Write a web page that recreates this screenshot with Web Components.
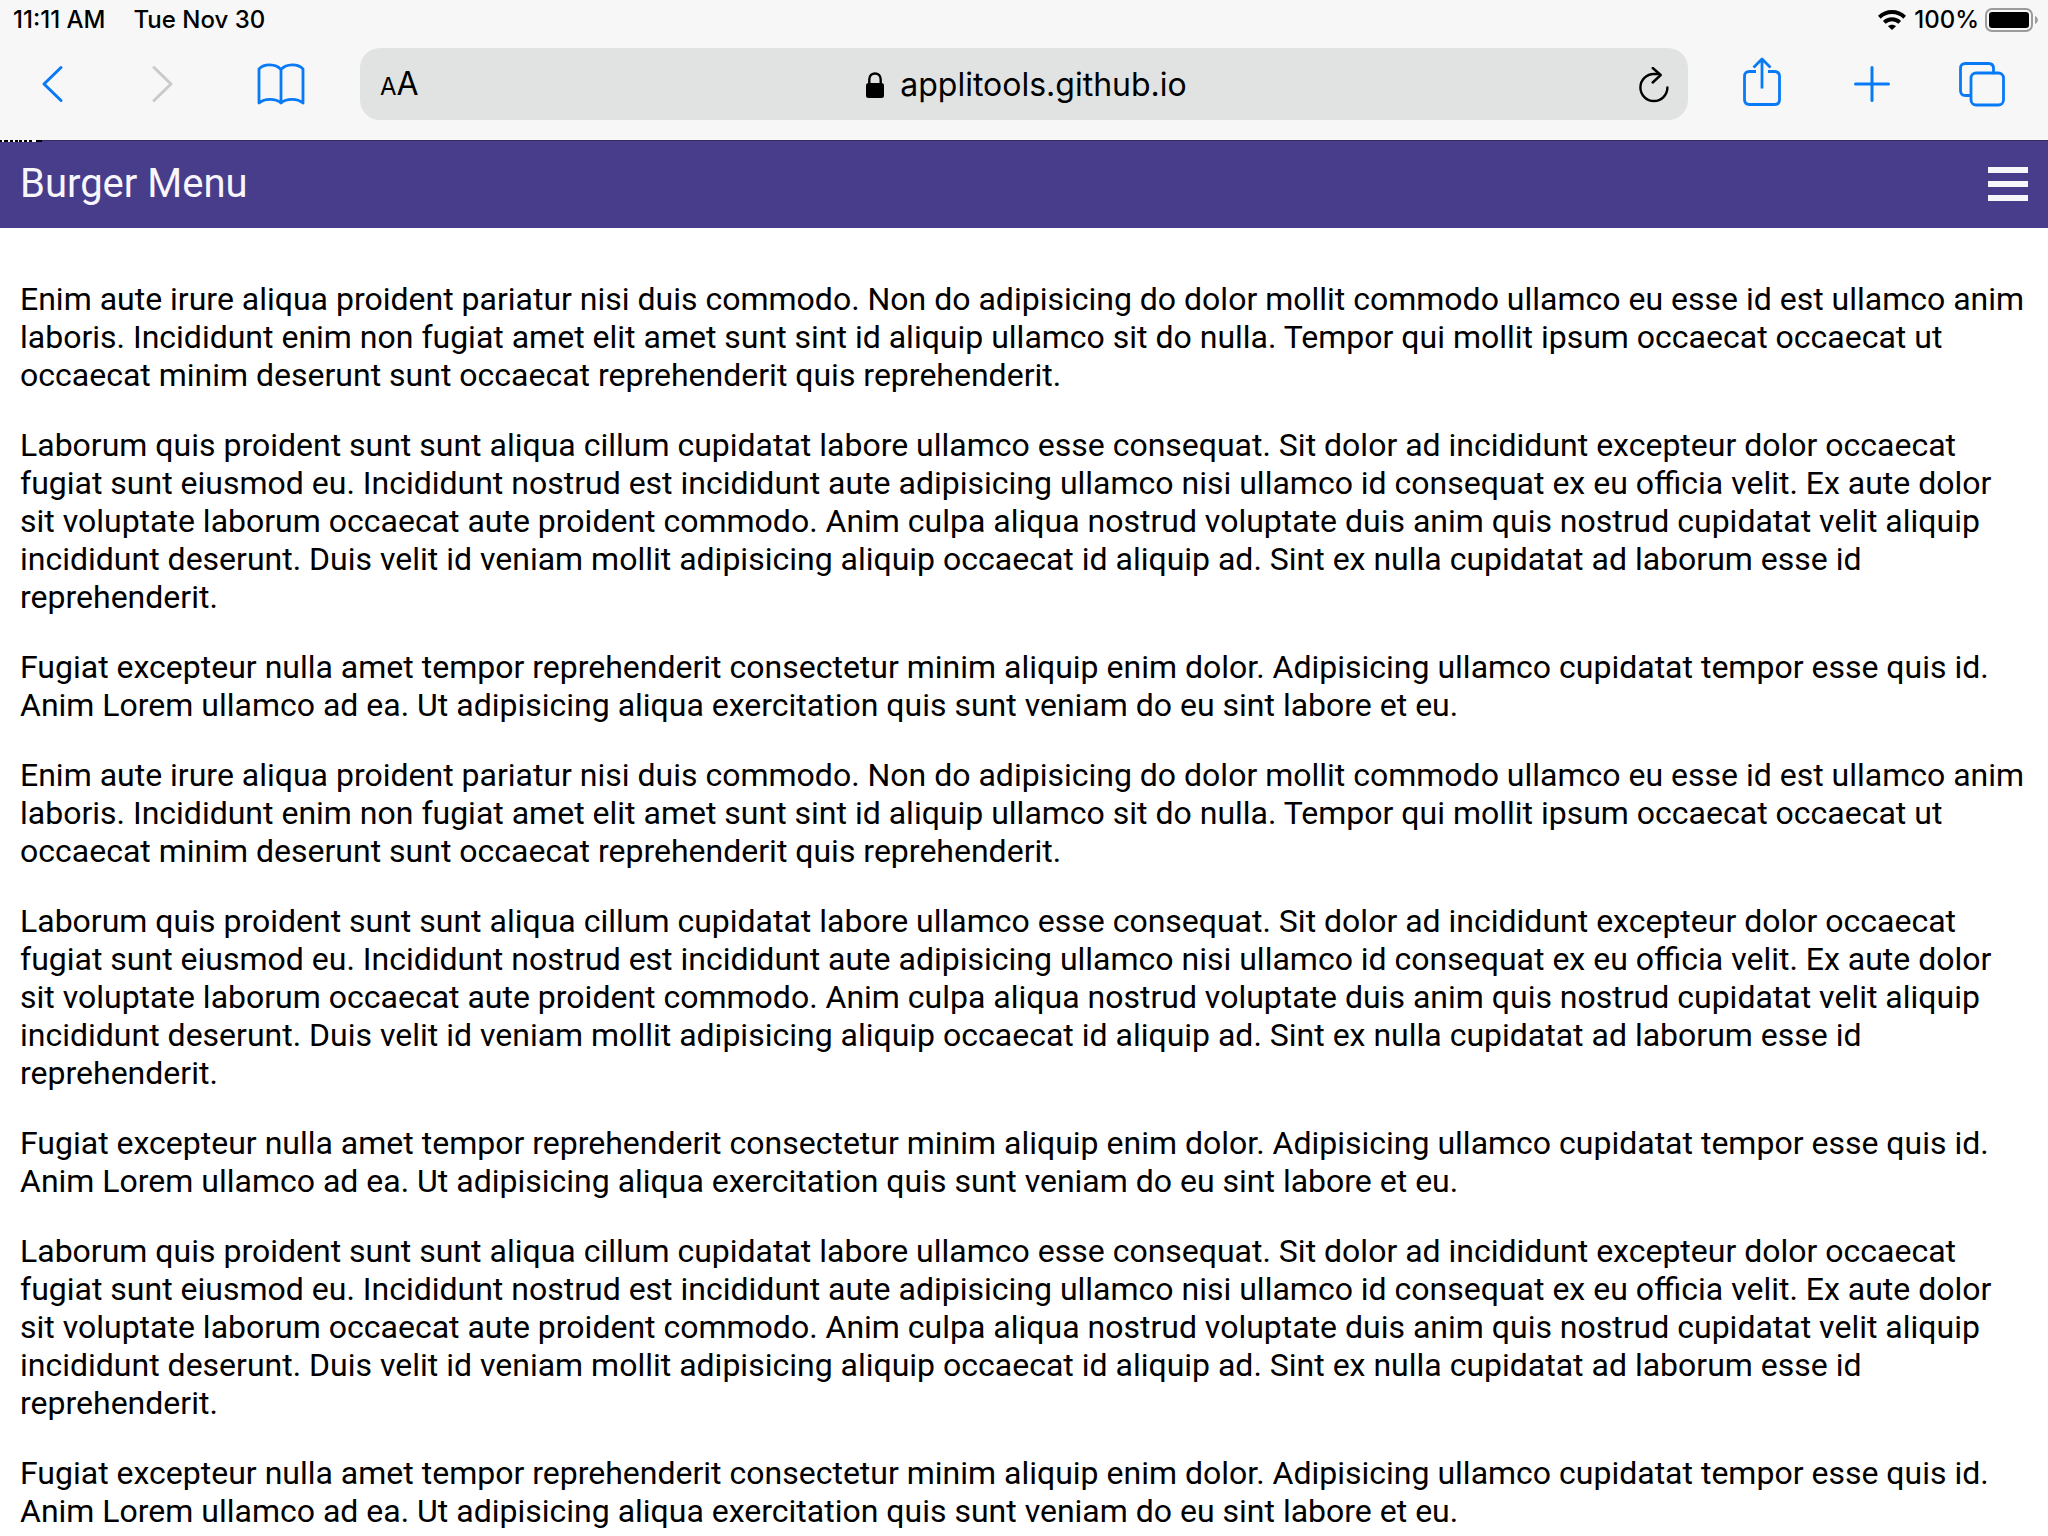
<!DOCTYPE html>
<html lang="en">
<head>
<meta charset="utf-8">
<meta name="viewport" content="width=device-width, initial-scale=1">
<title>Burger Menu</title>
<style>
  html, body { margin: 0; height: 100%; }
  body { background: #fff; color: #000; overflow: hidden; font-family: Roboto, "Liberation Sans", sans-serif; font-size: 32px; line-height: 38px; }
</style>
</head>
<body>
<browser-shell>
  <status-bar slot="chrome" time="11:11 AM" date="Tue Nov 30" charge="100%"></status-bar>
  <browser-toolbar slot="chrome" address="applitools.github.io"></browser-toolbar>
  <page-header>Burger Menu</page-header>
  <page-article></page-article>
</browser-shell>

<script>
const define = (name, html, setup) => customElements.define(name, class extends HTMLElement {
  connectedCallback() {
    if (this.shadowRoot) return;
    const t = document.createElement('template');
    t.innerHTML = html;
    this.attachShadow({ mode: 'open' }).append(t.content.cloneNode(true));
    if (setup) setup(this, this.shadowRoot);
  }
});

define('browser-shell', `
  <style>
    :host { display: flex; flex-direction: column; height: 100%; }
    header { flex: none; background: #f7f7f7; }
    main { flex: 1; min-height: 0; overflow: hidden; }
  </style>
  <header><slot name="chrome"></slot></header>
  <main><slot></slot></main>`);

define('status-bar', `
  <style>
    :host { display: flex; justify-content: space-between; align-items: center; height: 40px; padding: 0 9px 0 13px; font: 450 24px/40px Inter, "Liberation Sans", sans-serif; }
    div { display: flex; align-items: center; }
    .left { gap: 28px; }
    .right { gap: 8px; }
    .power { gap: 6px; }
    svg { display: block; }
  </style>
  <div class="left"><span id="time"></span><span id="date"></span></div>
  <div class="right">
    <svg width="28" height="20" viewBox="0 0 28 20" aria-hidden="true">
      <g fill="none" stroke="#000" stroke-width="4">
        <path d="M1.3 7.2C8.500 .3 19.500 .3 26.700 7.200"/>
        <path d="M6.300 12.400C10.600 8.300 17.400 8.300 21.700 12.400"/>
      </g>
      <path d="M10 16.200C12.200 14.200 15.800 14.200 18 16.200L14 20Z"/>
    </svg>
    <div class="power">
      <span id="charge"></span>
      <svg width="54" height="24" viewBox="0 0 54 24" aria-hidden="true">
        <rect x="1" y="1" width="46" height="22" rx="6" fill="none" stroke="#9b9b9b" stroke-width="2"/>
        <rect x="4" y="4" width="40" height="16" rx="3"/>
        <path d="M50 8C53.800 9.500 53.800 14.500 50 16Z" fill="#9b9b9b"/>
      </svg>
    </div>
  </div>`, (el, root) => {
  for (const k of ['time', 'date', 'charge']) root.getElementById(k).textContent = el.getAttribute(k);
});

define('tool-button', `
  <style>
    :host { display: block; color: #087af5; }
    :host([disabled]) { color: #cacaca; }
    button { display: flex; align-items: center; justify-content: center; width: 100%; height: 72px; padding: 0; border: 0; background: none; color: inherit; }
    svg { display: block; overflow: visible; fill: none; stroke: currentColor; stroke-width: 3; stroke-linecap: round; stroke-linejoin: round; }
  </style>
  <button type="button"></button>`, (el, root) => {
  const icons = {
    back: [20, 36, '<path d="M19 1.500L2 18L19 34.500"/>'],
    forward: [20, 36, '<path d="M1 1.500L18 18L1 34.500"/>'],
    book: [48, 42, '<path stroke-width="2.800" d="M24 6.500C18.500 .8 7.500 .3 2 6V40C7.500 35.200 18.500 35 24 40C29.500 35 40.500 35.200 46 40V6C40.500 .3 29.500 .8 24 6.500V40"/>'],
    share: [38, 56, '<path stroke-width="2.800" d="M13 15.500H6.500Q1.500 15.500 1.500 20.500V43.500Q1.500 48.500 6.500 48.500H31.500Q36.500 48.500 36.500 43.500V20.500Q36.500 15.500 31.500 15.500H25M19 32.500V3.500M10.500 11.500L19 3L27.500 11.500" stroke-linecap="butt"/>'],
    add: [36, 36, '<path d="M18 1.500V34.500M1.500 18H34.500"/>'],
    tabs: [46, 44, '<path stroke-width="2.800" d="M11.500 33.500H6.500Q1.500 33.500 1.500 28.500V6.500Q1.500 1.500 6.500 1.500H29.500Q34.500 1.500 34.500 6.500V11"/><rect x="12" y="11" width="32.500" height="32" rx="5" stroke-width="2.800"/>']
  };
  const [w, h, art] = icons[el.getAttribute('icon')];
  const b = root.querySelector('button');
  b.setAttribute('aria-label', el.getAttribute('label'));
  b.disabled = el.hasAttribute('disabled');
  b.innerHTML = `<svg width="${w}" height="${h}" viewBox="0 0 ${w} ${h}" aria-hidden="true">${art}</svg>`;
});

define('address-field', `
  <style>
    :host { display: flex; align-items: center; justify-content: space-between; box-sizing: border-box; height: 72px; padding: 2px 19px 0 20px; border-radius: 20px; background: #e1e3e2; font-family: Inter, "Liberation Sans", sans-serif; }
    button { display: flex; align-items: baseline; width: 44px; padding: 0; border: 0; background: none; color: #000; font: 400 32px/40px Inter, "Liberation Sans", sans-serif; }
    button small { font-size: 24px; }
    .reload { justify-content: flex-end; width: 40px; }
    label { display: flex; align-items: center; gap: 16px; }
    input { field-sizing: content; padding: 0; border: 0; outline: 0; background: none; color: #000; font: 400 32px/40px Inter, "Liberation Sans", sans-serif; }
    svg { display: block; }
  </style>
  <button type="button" aria-label="Text size"><small>A</small>A</button>
  <label>
    <svg width="18" height="26" viewBox="0 0 18 26" role="img" aria-label="Secure address">
      <rect y="11" width="18" height="15" rx="2.500"/>
      <path d="M3.300 12V7.500C3.300 -.6 14.700 -.6 14.700 7.500V12" fill="none" stroke="#000" stroke-width="2.400"/>
    </svg>
    <input type="text" inputmode="url" spellcheck="false">
  </label>
  <button type="button" class="reload" aria-label="Reload">
    <svg width="30" height="36" viewBox="0 0 30 36" fill="none" stroke="#000" stroke-width="2.400" stroke-linecap="round" stroke-linejoin="round" aria-hidden="true">
      <path d="M28.400 20.500A13.500 13.500 0 1 1 14.900 7H20"/>
      <path d="M13.700 1L21.700 8L13.700 15.500"/>
    </svg>
  </button>`, (el, root) => {
  root.querySelector('input').value = el.getAttribute('value');
});

define('browser-toolbar', `
  <style>
    :host { display: flex; padding: 8px 11px 20px 0; }
    .left, .right { display: grid; flex: none; }
    .left { grid-template-columns: 104px 118px 118px; margin-right: 20px; }
    .right { grid-template-columns: repeat(3, 110px); margin-left: 19px; }
    address-field { flex: 1; }
  </style>
  <div class="left">
    <tool-button icon="back" label="Back"></tool-button>
    <tool-button icon="forward" label="Forward" disabled></tool-button>
    <tool-button icon="book" label="Bookmarks"></tool-button>
  </div>
  <address-field></address-field>
  <div class="right">
    <tool-button icon="share" label="Share"></tool-button>
    <tool-button icon="add" label="New tab"></tool-button>
    <tool-button icon="tabs" label="Tabs"></tool-button>
  </div>`, (el, root) => {
  // Covers both orders of definition: the attribute for a later upgrade, the value for a field already built.
  const field = root.querySelector('address-field');
  field.setAttribute('value', el.getAttribute('address'));
  const input = field.shadowRoot?.querySelector('input');
  if (input) input.value = el.getAttribute('address');
});

define('page-header', `
  <style>
    :host { display: flex; position: relative; box-sizing: border-box; align-items: center; justify-content: space-between; height: 88px; padding: 0 20px; box-shadow: inset 0 1px #352c62; background: #483d8b; color: #f7f6fb; }
    h1 { margin: 0; font-size: 40px; line-height: 48px; font-weight: 400; }
    button { display: flex; flex-direction: column; gap: 8px; width: 40px; padding: 0; border: 0; background: none; }
    i { height: 6px; background: #f7f6fb; }
    svg { position: absolute; left: 0; top: 0; }
  </style>
  <svg width="42" height="2" viewBox="0 0 42 2" aria-hidden="true"><rect width="42" height="2"/><path d="M2 1H4M8 1H10M13 1H15M18 1H19M22 1H24M27 1H29M32 1H36" stroke="#fff" stroke-width="2"/></svg>
  <h1><slot></slot></h1>
  <button type="button" aria-label="Menu"><i></i><i></i><i></i></button>`);

define('page-article', `
  <style>
    :host { display: block; padding: 20px; }
    p { margin: 32px 0; }
  </style>`, (el, root) => {
  const enim = 'Enim aute irure aliqua proident pariatur nisi duis commodo. Non do adipisicing do dolor mollit commodo ullamco eu esse id est ullamco anim laboris. Incididunt enim non fugiat amet elit amet sunt sint id aliquip ullamco sit do nulla. Tempor qui mollit ipsum occaecat occaecat ut occaecat minim deserunt sunt occaecat reprehenderit quis reprehenderit.';
  const laborum = 'Laborum quis proident sunt sunt aliqua cillum cupidatat labore ullamco esse consequat. Sit dolor ad incididunt excepteur dolor occaecat fugiat sunt eiusmod eu. Incididunt nostrud est incididunt aute adipisicing ullamco nisi ullamco id consequat ex eu officia velit. Ex aute dolor sit voluptate laborum occaecat aute proident commodo. Anim culpa aliqua nostrud voluptate duis anim quis nostrud cupidatat velit aliquip incididunt deserunt. Duis velit id veniam mollit adipisicing aliquip occaecat id aliquip ad. Sint ex nulla cupidatat ad laborum esse id reprehenderit.';
  const fugiat = 'Fugiat excepteur nulla amet tempor reprehenderit consectetur minim aliquip enim dolor. Adipisicing ullamco cupidatat tempor esse quis id. Anim Lorem ullamco ad ea. Ut adipisicing aliqua exercitation quis sunt veniam do eu sint labore et eu.';
  for (const text of [enim, laborum, fugiat, enim, laborum, fugiat, laborum, fugiat]) {
    const p = document.createElement('p');
    p.textContent = text;
    root.append(p);
  }
});
</script>
</body>
</html>
